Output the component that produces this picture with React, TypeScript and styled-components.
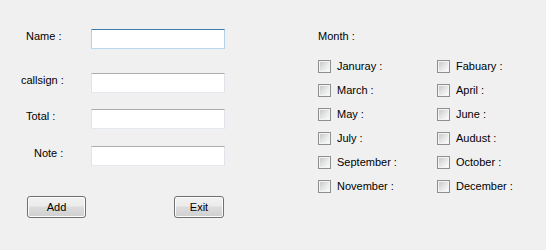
import React from "react";
import styled, { createGlobalStyle } from "styled-components";

const GlobalStyle = createGlobalStyle`
  html, body {
    margin: 0;
    padding: 0;
    background: #f0f0f0;
  }
  body {
    font-family: "Liberation Sans", Arial, sans-serif;
    font-size: 11px;
    color: #000;
  }
`;

const Window = styled.div`
  display: flex;
  width: 546px;
  height: 250px;
  background: #f0f0f0;
`;

const FormPanel = styled.div`
  display: flex;
  flex-direction: column;
  width: 318px;
  padding-top: 29px;
`;

const FieldRow = styled.div<{ $gap: number }>`
  display: grid;
  grid-template-columns: 91px 134px;
  height: 20px;
  margin-top: ${(p) => p.$gap}px;
`;

const Label = styled.span<{ $indent: number }>`
  padding-left: ${(p) => p.$indent}px;
  line-height: 13px;
  margin-top: 1px;
  white-space: nowrap;
`;

const TextBox = styled.input<{ $focused?: boolean }>`
  box-sizing: border-box;
  width: 134px;
  height: 20px;
  margin: 0;
  padding: 1px 3px;
  background: #fff;
  border: 1px solid ${(p) => (p.$focused ? "#b5cfe7" : "#e2e3ea")};
  border-top-color: ${(p) => (p.$focused ? "#3d7bad" : "#abadb3")};
  border-bottom-color: ${(p) => (p.$focused ? "#b7d9ed" : "#e3e9ef")};
  font: inherit;
  outline: none;
`;

const ButtonRow = styled.div`
  display: flex;
  justify-content: space-between;
  width: 197px;
  margin: 30px 0 0 27px;
`;

const Button = styled.button<{ $width: number }>`
  box-sizing: border-box;
  width: ${(p) => p.$width}px;
  height: 22px;
  margin: 0;
  padding: 0;
  border: 1px solid #707070;
  border-radius: 3px;
  box-shadow: inset 0 0 0 1px #fcfcfc;
  background: linear-gradient(
    to bottom,
    #f2f2f2 0%,
    #ebebeb 45%,
    #dddddd 50%,
    #cfcfcf 100%
  );
  font: inherit;
  color: #000;
`;

const MonthPanel = styled.div`
  display: flex;
  flex-direction: column;
  padding-top: 30px;
`;

const MonthTitle = styled.span`
  line-height: 13px;
  height: 13px;
`;

const MonthGrid = styled.div`
  display: grid;
  grid-template-columns: 119px 100px;
  grid-auto-rows: 13px;
  row-gap: 11px;
  margin-top: 17px;
`;

const CheckItem = styled.label`
  display: flex;
  align-items: center;
  gap: 6px;
  line-height: 13px;
  white-space: nowrap;
`;

const Box = styled.span`
  box-sizing: border-box;
  width: 13px;
  height: 13px;
  border: 1px solid #8e8f8f;
  padding: 1px;
  background: #f4f4f4;
  flex: none;

  &::after {
    content: "";
    display: block;
    width: 9px;
    height: 9px;
    background: linear-gradient(135deg, #c8c9cb 0%, #e4e5e6 50%, #fbfbfb 100%);
  }
`;

const fields = [
  { label: "Name :", indent: 26, gap: 0, focused: true },
  { label: "callsign :", indent: 21, gap: 24 },
  { label: "Total :", indent: 26, gap: 16 },
  { label: "Note :", indent: 34, gap: 17 },
];

const months = [
  "Januray :",
  "Fabuary :",
  "March :",
  "April :",
  "May :",
  "June :",
  "July :",
  "Audust :",
  "September :",
  "October :",
  "November :",
  "December :",
];

export default function App() {
  return (
    <>
      <GlobalStyle />
      <Window>
        <FormPanel>
          {fields.map((f) => (
            <FieldRow key={f.label} $gap={f.gap}>
              <Label $indent={f.indent}>{f.label}</Label>
              <TextBox $focused={f.focused} />
            </FieldRow>
          ))}
          <ButtonRow>
            <Button $width={59}>Add</Button>
            <Button $width={50}>Exit</Button>
          </ButtonRow>
        </FormPanel>
        <MonthPanel>
          <MonthTitle>Month :</MonthTitle>
          <MonthGrid>
            {months.map((m) => (
              <CheckItem key={m}>
                <Box />
                {m}
              </CheckItem>
            ))}
          </MonthGrid>
        </MonthPanel>
      </Window>
    </>
  );
}
